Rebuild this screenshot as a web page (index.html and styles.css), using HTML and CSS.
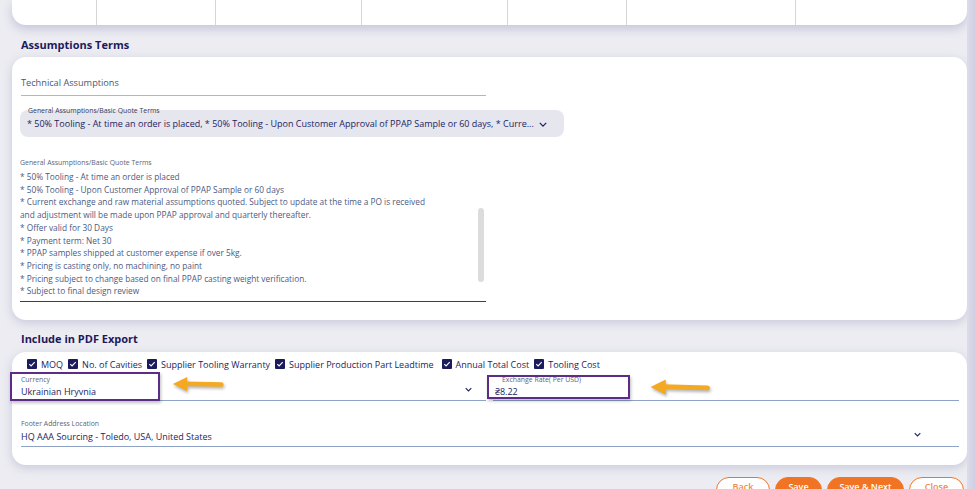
FILE: index.html
```html
<!DOCTYPE html>
<html lang="en">
<head>
    <meta charset="UTF-8">
    <meta name="viewport" content="width=device-width, initial-scale=1.0">
    <title>Quote - Assumptions Terms</title>
    <link rel="stylesheet" href="styles.css">
</head>
<body>
    <div class="top-card">
        <div class="col"></div>
        <div class="col"></div>
        <div class="col"></div>
        <div class="col"></div>
        <div class="col"></div>
        <div class="col"></div>
        <div class="col"></div>
    </div>

    <h2 class="section-title">Assumptions Terms</h2>

    <div class="card terms-card">
        <div class="field tech-field">
            <div class="field-value muted">Technical Assumptions</div>
        </div>

        <div class="select-box">
            <div class="tiny-label">General Assumptions/Basic Quote Terms</div>
            <div class="select-value">
                <span>* 50% Tooling - At time an order is placed, * 50% Tooling - Upon Customer Approval of PPAP Sample or 60 days, * Curre...</span>
                <svg class="chevron" viewBox="0 0 10 6" width="8" height="5"><path d="M1 1l4 4 4-4" fill="none" stroke="#1d2460" stroke-width="1.6"/></svg>
            </div>
        </div>

        <div class="textarea-box">
            <div class="tiny-label grey">General Assumptions/Basic Quote Terms</div>
            <div class="textarea-text">
                <div>* 50% Tooling - At time an order is placed</div>
                <div>* 50% Tooling - Upon Customer Approval of PPAP Sample or 60 days</div>
                <div>* Current exchange and raw material assumptions quoted. Subject to update at the time a PO is received</div>
                <div>and adjustment will be made upon PPAP approval and quarterly thereafter.</div>
                <div>* Offer valid for 30 Days</div>
                <div>* Payment term: Net 30</div>
                <div>* PPAP samples shipped at customer expense if over 5kg.</div>
                <div>* Pricing is casting only, no machining, no paint</div>
                <div>* Pricing subject to change based on final PPAP casting weight verification.</div>
                <div>* Subject to final design review</div>
            </div>
            <div class="scrollbar"></div>
        </div>
    </div>

    <h2 class="section-title pdf-title">Include in PDF Export</h2>

    <div class="card pdf-card">
        <div class="checks">
            <label class="check"><span class="box"></span>MOQ</label>
            <label class="check"><span class="box"></span>No. of Cavities</label>
            <label class="check"><span class="box"></span>Supplier Tooling Warranty</label>
            <label class="check"><span class="box"></span>Supplier Production Part Leadtime</label>
            <label class="check"><span class="box"></span>Annual Total Cost</label>
            <label class="check"><span class="box"></span>Tooling Cost</label>
        </div>

        <div class="row">
            <div class="field line-field currency">
                <div class="tiny-label grey">Currency</div>
                <div class="field-value">Ukrainian Hryvnia</div>
                <svg class="chevron" viewBox="0 0 10 6" width="7" height="5"><path d="M1 1l4 4 4-4" fill="none" stroke="#1d2460" stroke-width="1.6"/></svg>
                <div class="mark mark-currency"></div>
                <svg class="arrow arrow-currency" viewBox="0 0 60 20" width="54" height="18"><path d="M56 9.5L14 8.5" stroke="#f5a821" stroke-width="5" stroke-linecap="round" fill="none"/><path d="M2 9l16-8v16z" fill="#f5a821"/></svg>
            </div>
            <div class="field line-field rate">
                <div class="tiny-label grey rate-label">Exchange Rate( Per USD)</div>
                <div class="field-value">&#8372;8.22</div>
                <div class="mark mark-rate"></div>
                <svg class="arrow arrow-rate" viewBox="0 0 66 20" width="64" height="19"><path d="M62 10.5L14 9" stroke="#f5a821" stroke-width="5" stroke-linecap="round" fill="none"/><path d="M2 9.5l16-8v16z" fill="#f5a821"/></svg>
            </div>
        </div>

        <div class="field line-field footer-field">
            <div class="tiny-label grey">Footer Address Location</div>
            <div class="field-value">HQ AAA Sourcing - Toledo, USA, United States</div>
            <svg class="chevron" viewBox="0 0 10 6" width="7" height="5"><path d="M1 1l4 4 4-4" fill="none" stroke="#1d2460" stroke-width="1.6"/></svg>
        </div>
    </div>

    <div class="actions">
        <button class="btn outline">Back</button>
        <button class="btn solid">Save</button>
        <button class="btn solid wide">Save &amp; Next</button>
        <button class="btn outline">Close</button>
    </div>
</body>
</html>
```

FILE: styles.css
```css
body {
    margin: 0;
    height: 489px;
    overflow: hidden;
    background-color: #ececf2;
    font-family: "Open Sans", "Noto Sans", sans-serif;
    color: #1d2460;
    position: relative;
}
body::after {
    content: "";
    position: absolute;
    top: 0;
    right: 0;
    width: 8px;
    height: 100%;
    background: linear-gradient(to right, #dcdbe8, #d0cfe2);
}
.top-card {
    display: grid;
    grid-template-columns: 85px 119px 146px 146px 119px 169px 1fr;
    height: 25px;
    margin: 0 8px 0 12px;
    background: #fff;
    border-radius: 0 0 14px 14px;
    box-shadow: 0 4px 10px rgba(150, 150, 190, 0.45);
    overflow: hidden;
}
.col {
    border-right: 1px solid #d6d6d6;
}
.col:last-child {
    border-right: none;
}
.section-title {
    margin: 0;
    padding: 13px 0 0 21px;
    height: 19px;
    font-size: 11px;
    font-weight: 700;
    line-height: 14px;
    color: #1b1a5c;
}
.card {
    margin: 0 8px 0 12px;
    background: #fff;
    border-radius: 14px;
    box-shadow: 0 3px 10px rgba(150, 150, 190, 0.4);
}
.terms-card {
    height: 263px;
    padding: 0 0 0 8px;
    box-sizing: border-box;
    overflow: hidden;
}
.tech-field {
    width: 465px;
    margin-left: 1px;
    padding-top: 20px;
    height: 18px;
    border-bottom: 1.5px solid #a9b8cf;
}
.field-value {
    font-size: 9px;
    line-height: 12px;
    color: #1d2460;
    white-space: nowrap;
}
.muted {
    color: #4a5775;
    font-size: 9.2px;
}
.select-box {
    display: flow-root;
    width: 544px;
    height: 27px;
    margin-top: 14px;
    background: #e6e6ef;
    border-radius: 8px;
    box-sizing: border-box;
    padding: 0 0 0 7px;
}
.tiny-label {
    font-size: 6.9px;
    line-height: 8px;
    color: #3a3a52;
    white-space: nowrap;
}
.select-box .tiny-label {
    padding-left: 1px;
    margin-top: -3px;
}
.tiny-label.grey {
    color: #5c6477;
}
.select-value {
    display: flex;
    align-items: center;
    gap: 5px;
    margin-top: 3px;
    font-size: 9px;
    line-height: 12px;
    color: #1d2460;
    white-space: nowrap;
}
.chevron {
    display: block;
}
.textarea-box {
    position: relative;
    width: 466px;
    margin-top: 22px;
    border-bottom: 1.5px solid #3c3b58;
    padding-bottom: 3px;
}
.textarea-text {
    font-size: 8.3px;
    line-height: 12.7px;
    color: #4b5a82;
    white-space: nowrap;
    margin-top: 4px;
}
.scrollbar {
    position: absolute;
    right: 2px;
    top: 49px;
    width: 6px;
    height: 74px;
    border-radius: 3px;
    background: #dcdcdc;
}
.pdf-title {
    padding-top: 12px;
    height: 20px;
}
.pdf-card {
    height: 113px;
    padding: 6px 8px 0 9px;
    box-sizing: border-box;
}
.checks {
    display: flex;
    align-items: center;
    gap: 5px;
    padding-left: 6px;
    height: 12px;
}
.check {
    display: flex;
    align-items: center;
    gap: 4px;
    font-size: 9px;
    color: #1d2460;
    white-space: nowrap;
}
.check:nth-child(5) {
    margin-left: 3px;
}
.box {
    width: 10px;
    height: 10px;
    border-radius: 1px;
    background: #1b1a5c url("data:image/svg+xml;utf8,<svg xmlns='http://www.w3.org/2000/svg' viewBox='0 0 10 10'><path d='M2.3 5.2l1.8 1.8 3.6-3.8' fill='none' stroke='white' stroke-width='1.1'/></svg>") center / 10px 10px no-repeat;
}
.row {
    display: flex;
    gap: 7px;
}
.field {
    position: relative;
}
.line-field {
    border-bottom: 1.2px solid #8ea3c6;
    padding-top: 6px;
    height: 24px;
}
.line-field .field-value {
    margin-top: 2px;
}
.line-field .chevron {
    position: absolute;
    right: 14px;
    top: 17px;
}
.currency {
    width: 465px;
}
.rate {
    flex: 1;
}
.rate .rate-label {
    padding-left: 9px;
}
.rate .field-value {
    padding-left: 2px;
}
.mark {
    position: absolute;
    border: 2px solid #5b2d84;
    box-sizing: border-box;
    box-shadow: 1px 2px 3px rgba(0, 0, 0, 0.25);
}
.mark-currency {
    left: -11px;
    top: 2px;
    width: 150px;
    height: 29px;
}
.mark-rate {
    left: -6px;
    top: 5px;
    width: 143px;
    height: 24px;
}
.arrow {
    position: absolute;
    filter: drop-shadow(1px 2px 1.5px rgba(0, 0, 0, 0.3));
}
.arrow-currency {
    left: 150px;
    top: 6px;
}
.arrow-rate {
    left: 155px;
    top: 8px;
}
.footer-field {
    margin-top: 13px;
    width: 938px;
    height: 26px;
}
.footer-field .field-value {
    margin-top: 3px;
}
.footer-field .chevron {
    right: 38px;
    top: 18px;
}
.actions {
    display: flex;
    justify-content: flex-end;
    gap: 5px;
    padding: 12px 11px 0 0;
}
.btn {
    height: 26px;
    padding: 0 0 7px;
    border-radius: 13px;
    font-family: "Open Sans", "Noto Sans", sans-serif;
    font-size: 9px;
    font-weight: 600;
    white-space: nowrap;
    border: 1.5px solid #f07424;
    cursor: pointer;
    width: 54px;
}
.outline {
    background: #fff;
    color: #f08a4b;
}
.outline:last-child {
    width: 55px;
}
.solid {
    background: #f07424;
    color: #fff;
    width: 47px;
}
.solid.wide {
    width: 77px;
}
```
